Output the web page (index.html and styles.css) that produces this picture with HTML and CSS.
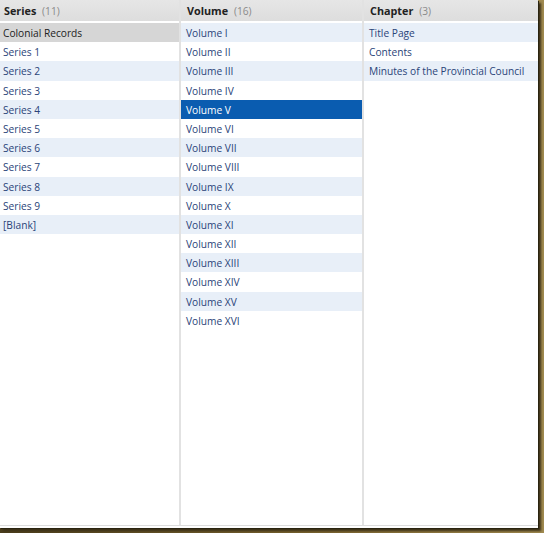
FILE: index.html
```html
<!DOCTYPE html>
<html>
<head>
<meta charset="utf-8">
<link rel="stylesheet" href="styles.css">
</head>
<body>
<div class="frame">
  <div class="browser">
    <div class="col col-first">
      <div class="head"><b>Series</b> <span class="count">(11)</span></div>
      <ul class="list">
        <li class="sel-dim">Colonial Records</li>
        <li>Series 1</li>
        <li>Series 2</li>
        <li>Series 3</li>
        <li>Series 4</li>
        <li>Series 5</li>
        <li>Series 6</li>
        <li>Series 7</li>
        <li>Series 8</li>
        <li>Series 9</li>
        <li>[Blank]</li>
      </ul>
    </div>
    <div class="col">
      <div class="head"><b>Volume</b> <span class="count">(16)</span></div>
      <ul class="list">
        <li>Volume I</li>
        <li>Volume II</li>
        <li>Volume III</li>
        <li>Volume IV</li>
        <li class="sel">Volume V</li>
        <li>Volume VI</li>
        <li>Volume VII</li>
        <li>Volume VIII</li>
        <li>Volume IX</li>
        <li>Volume X</li>
        <li>Volume XI</li>
        <li>Volume XII</li>
        <li>Volume XIII</li>
        <li>Volume XIV</li>
        <li>Volume XV</li>
        <li>Volume XVI</li>
      </ul>
    </div>
    <div class="col col-last">
      <div class="head"><b>Chapter</b> <span class="count">(3)</span></div>
      <ul class="list">
        <li>Title Page</li>
        <li>Contents</li>
        <li>Minutes of the Provincial Council</li>
      </ul>
    </div>
  </div>
</div>
</body>
</html>
```
FILE: styles.css
```css
html, body {
  margin: 0;
  padding: 0;
}
body {
  width: 544px;
  height: 533px;
  overflow: hidden;
  background: linear-gradient(90deg, #4a3d1c 0%, #7a6430 60%, #a08a50 100%);
  font-family: "Open Sans", "DejaVu Sans", sans-serif;
  font-size: 10.2px;
}
.frame {
  width: 538px;
  height: 528px;
  background: #ffffff;
  box-shadow: 1px 1px 0 #2a2410, 3px 3px 2px #3b3118;
}
.browser {
  display: grid;
  grid-template-columns: 181px 183px 1fr;
  height: 525px;
  border-bottom: 1px solid #dcdcdc;
  margin-left: -2px;
  width: 540px;
}
.col {
  border-left: 2px solid #e2e2e2;
  display: flex;
  flex-direction: column;
  min-width: 0;
}
.head {
  height: 21px;
  line-height: 21px;
  padding-left: 6px;
  background: linear-gradient(#e6e6e6, #dddddd);
  border-bottom: 1px solid #ffffff;
  color: #222222;
  white-space: nowrap;
  font-size: 10.8px;
}
.head b {
  font-weight: bold;
}
.count {
  color: #8a8a8a;
  margin-left: 3px;
  font-size: 10.2px;
}
.list {
  list-style: none;
  margin: 0;
  padding: 1px 0 0;
}
.list li {
  height: 17.2px;
  line-height: 17.2px;
  padding-top: 2px;
  padding-left: 5px;
  color: #2a4478;
  white-space: nowrap;
  background: #ffffff;
}
.col-first .list li {
  padding-left: 3px;
}
.col-first .head {
  padding-left: 4px;
}
.list li:nth-child(odd) {
  background: #e8eff8;
}
.list li.sel-dim {
  background: #d6d6d6;
  color: #222222;
}
.list li.sel {
  background: #0a5cb0;
  color: #ffffff;
}
```
